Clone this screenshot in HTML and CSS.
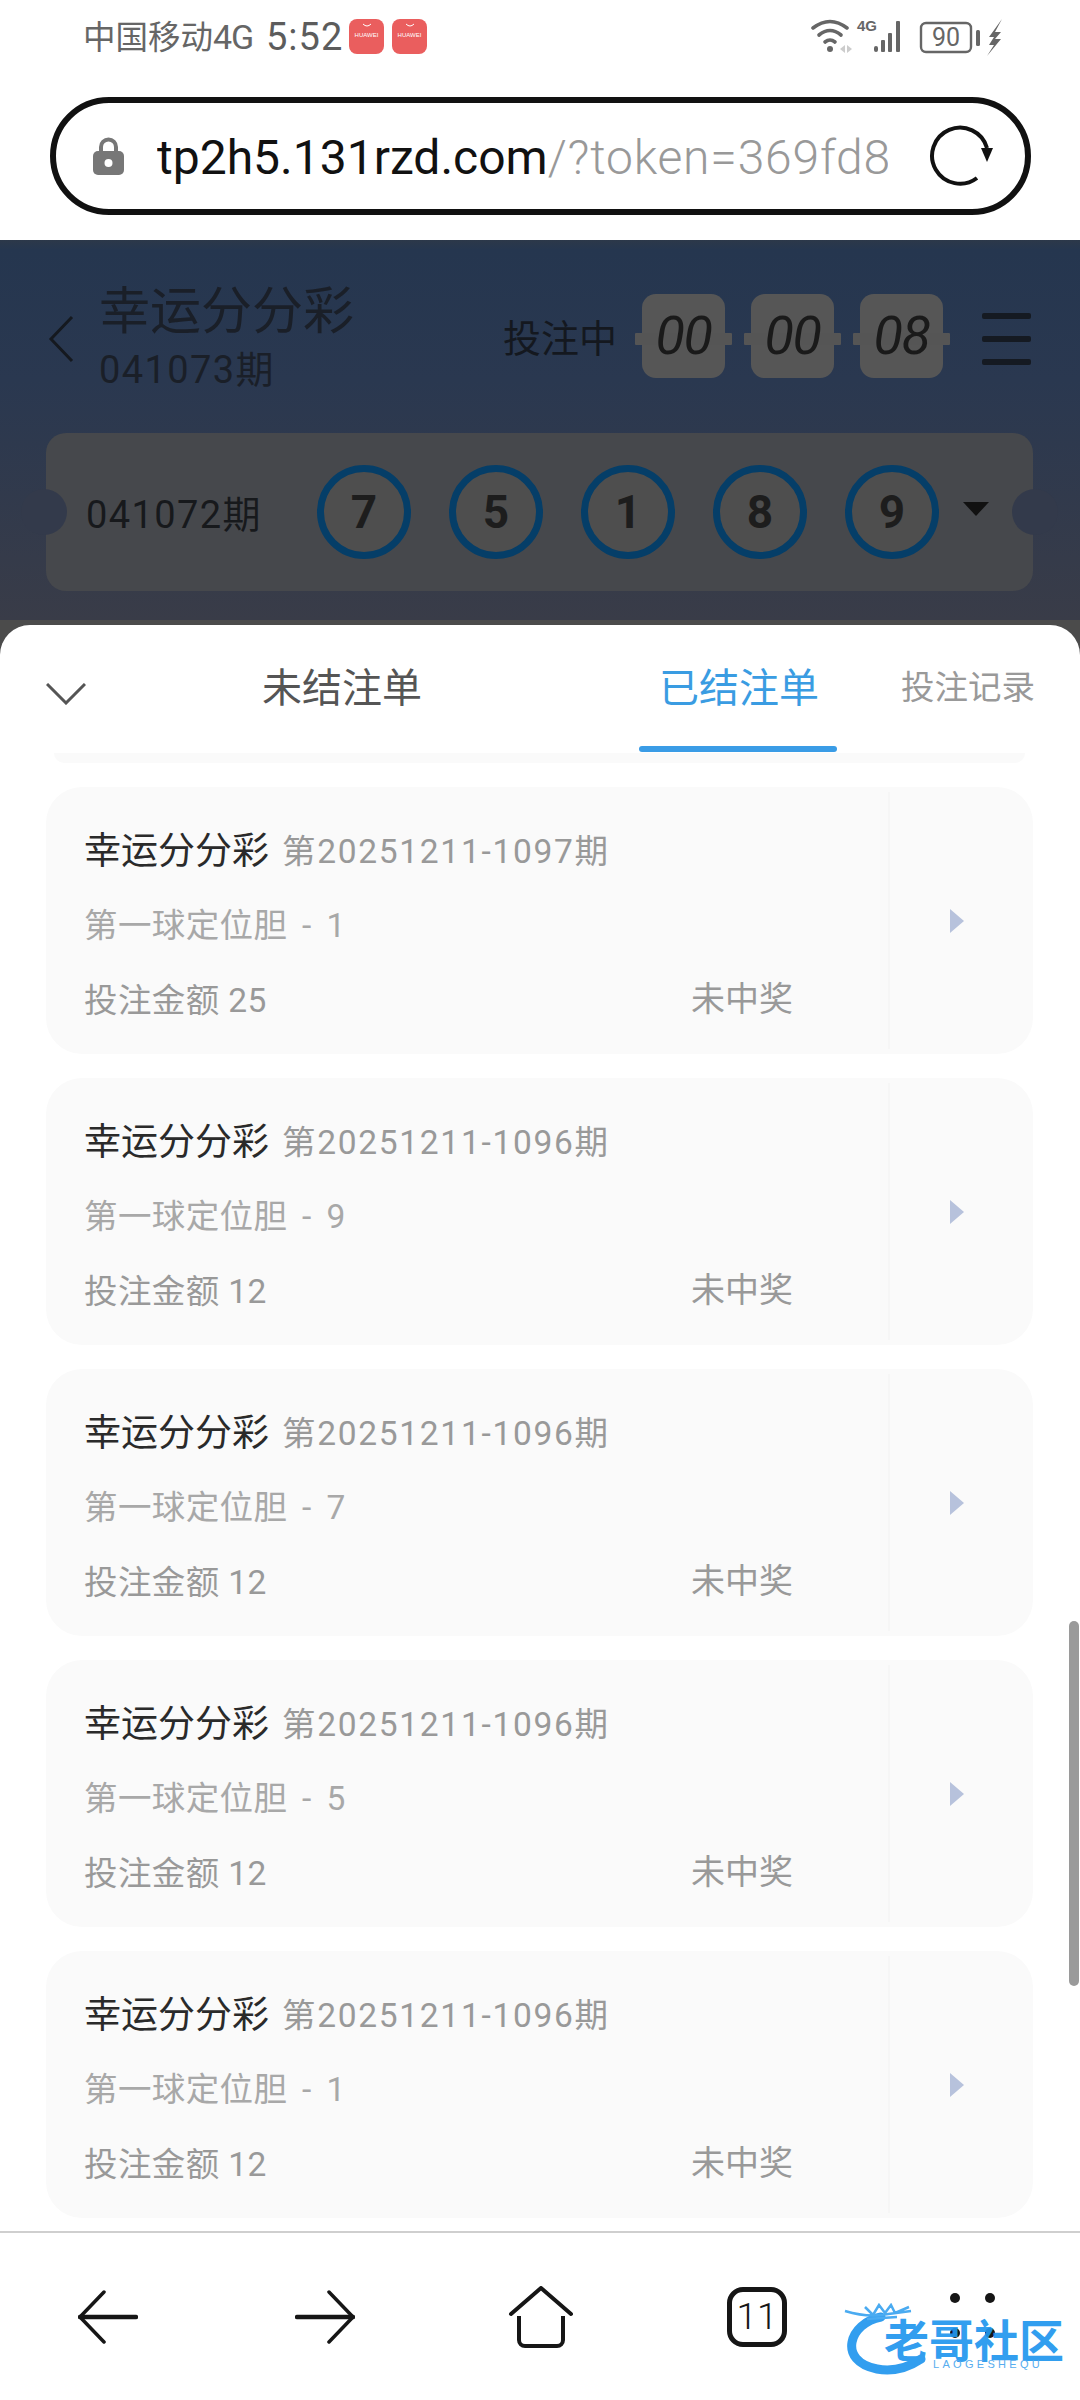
FILE: index.html
```html
<!DOCTYPE html>
<html lang="zh-CN">
<head>
<meta charset="utf-8">
<title>幸运分分彩</title>
<link rel="stylesheet" href="styles.css">
</head>
<body>
<div class="phone">
  <div class="top">
    <div class="status">
      <span class="carrier">中国移动<span class="carrier-net">4G</span></span>
      <span class="clock">5:52</span>
      <span class="app"><svg class="app-smile" viewBox="0 0 12 6"><path d="M2 1q4 4 8 0" fill="none" stroke="#fff" stroke-width="1"/></svg><span class="app-name">HUAWEI</span></span>
      <span class="app"><svg class="app-smile" viewBox="0 0 12 6"><path d="M2 1q4 4 8 0" fill="none" stroke="#fff" stroke-width="1"/></svg><span class="app-name">HUAWEI</span></span>
      <svg class="status-icons" width="194" height="40" viewBox="0 0 194 40">
        <g fill="none" stroke="#666" stroke-width="3.6" stroke-linecap="round">
          <path d="M2 12Q19 -1 36 12"/><path d="M8 19Q19 10 30 19"/><path d="M14 26Q19 22 24 26"/>
        </g>
        <circle cx="19" cy="33" r="3" fill="#666"/>
        <path d="M29 33l5-4v8zM36 29l5 4-5 4z" fill="#ccc"/>
        <text x="46" y="15" class="s4g">4G</text>
        <g fill="#666">
          <rect x="63" y="30" width="4" height="6" rx="2"/><rect x="70" y="24" width="4" height="12" rx="1"/><rect x="77" y="17" width="4" height="19" rx="1"/><rect x="85" y="5" width="4" height="31" rx="1"/>
        </g>
        <rect x="110" y="7" width="50" height="29" rx="5" fill="none" stroke="#666" stroke-width="2.4"/>
        <text x="135" y="30" class="sbatt">90</text>
        <rect x="165" y="14" width="4" height="16" rx="1.5" fill="#666"/>
        <path d="M191 3L178 21h5l-5 8h5l-7 11 14-17h-6l6-7h-6z" fill="#666"/>
      </svg>
    </div>
    <div class="urlbar">
      <svg class="lock" width="31" height="38" viewBox="0 0 31 38"><path d="M8 16V10a7.500 7.500 0 0 1 15 0v6" fill="none" stroke="#777" stroke-width="4"/><rect y="14" width="31" height="24" rx="5" fill="#777"/><circle cx="15.500" cy="26" r="4" fill="#fff"/></svg>
      <div class="url"><span class="url-host">tp2h5.131rzd.com</span><span class="url-rest">/?token=369fd8a2c17e</span></div>
      <svg class="reload" width="66" height="64" viewBox="0 0 66 64"><path d="M48 54A28 28 0 1 1 58 24" fill="none" stroke="#111" stroke-width="4"/><path d="M52 24H64L58 38Z" fill="#111"/></svg>
    </div>
  </div>

  <section class="hero">
    <div class="hero-head">
      <svg class="hero-back" width="26" height="48" viewBox="0 0 26 48"><path d="M24 2L3 24l21 22" fill="none" stroke="#15191f" stroke-width="3"/></svg>
      <div class="hero-title">
        <div class="hero-name">幸运分分彩</div>
        <div class="hero-issue">041073期</div>
      </div>
      <div class="hero-state">投注中</div>
      <div class="flip">00</div>
      <div class="flip">00</div>
      <div class="flip">08</div>
      <div class="burger"><i></i><i></i><i></i></div>
    </div>
    <div class="ticket">
      <span class="ticket-issue">041072期</span>
      <div class="balls">
        <span class="ball">7</span><span class="ball">5</span><span class="ball">1</span><span class="ball">8</span><span class="ball">9</span>
      </div>
      <span class="caret"></span>
    </div>
  </section>

  <section class="sheet-wrap">
    <div class="sheet">
      <div class="tabs">
        <svg class="collapse" width="40" height="22" viewBox="0 0 40 22"><path d="M1 1l19 19L39 1" fill="none" stroke="#555" stroke-width="3"/></svg>
        <span class="tab tab-open">未结注单</span>
        <span class="tab tab-active">已结注单</span>
        <span class="tab-log">投注记录</span>
      </div>
      <div class="list">
        <div class="peek"></div>

        <article class="card">
          <div class="card-main">
            <div class="row row-head"><span class="game">幸运分分彩</span><span class="period">第20251211-1097期</span></div>
            <div class="row pick">第一球定位胆 - 1</div>
            <div class="row row-split"><span class="stake">投注金额 25</span><span class="result">未中奖</span></div>
          </div>
          <div class="card-side"><span class="arrow"></span></div>
        </article>

        <article class="card">
          <div class="card-main">
            <div class="row row-head"><span class="game">幸运分分彩</span><span class="period">第20251211-1096期</span></div>
            <div class="row pick">第一球定位胆 - 9</div>
            <div class="row row-split"><span class="stake">投注金额 12</span><span class="result">未中奖</span></div>
          </div>
          <div class="card-side"><span class="arrow"></span></div>
        </article>

        <article class="card">
          <div class="card-main">
            <div class="row row-head"><span class="game">幸运分分彩</span><span class="period">第20251211-1096期</span></div>
            <div class="row pick">第一球定位胆 - 7</div>
            <div class="row row-split"><span class="stake">投注金额 12</span><span class="result">未中奖</span></div>
          </div>
          <div class="card-side"><span class="arrow"></span></div>
        </article>

        <article class="card">
          <div class="card-main">
            <div class="row row-head"><span class="game">幸运分分彩</span><span class="period">第20251211-1096期</span></div>
            <div class="row pick">第一球定位胆 - 5</div>
            <div class="row row-split"><span class="stake">投注金额 12</span><span class="result">未中奖</span></div>
          </div>
          <div class="card-side"><span class="arrow"></span></div>
        </article>

        <article class="card">
          <div class="card-main">
            <div class="row row-head"><span class="game">幸运分分彩</span><span class="period">第20251211-1096期</span></div>
            <div class="row pick">第一球定位胆 - 1</div>
            <div class="row row-split"><span class="stake">投注金额 12</span><span class="result">未中奖</span></div>
          </div>
          <div class="card-side"><span class="arrow"></span></div>
        </article>
      </div>
      <div class="scrollbar"></div>
    </div>
  </section>

  <nav class="nav">
    <svg class="nav-icon nav-back" width="60" height="54" viewBox="0 0 60 54"><path d="M26 2L2 27l24 25" fill="none" stroke="#161616" stroke-width="3.500" stroke-linecap="round"/><path d="M2 27H58" fill="none" stroke="#161616" stroke-width="4.500" stroke-linecap="round"/></svg>
    <svg class="nav-icon nav-forward" width="60" height="54" viewBox="0 0 60 54"><path d="M34 2L58 27 34 52" fill="none" stroke="#161616" stroke-width="3.500" stroke-linecap="round"/><path d="M2 27H58" fill="none" stroke="#161616" stroke-width="4.500" stroke-linecap="round"/></svg>
    <svg class="nav-icon nav-home" width="66" height="62" viewBox="0 0 66 62"><path d="M3 28L33 2 63 28" fill="none" stroke="#161616" stroke-width="4" stroke-linecap="round" stroke-linejoin="round"/><path d="M11 30V54a6 6 0 0 0 6 6H49a6 6 0 0 0 6-6V30" fill="none" stroke="#161616" stroke-width="4"/></svg>
    <span class="nav-tabs">11</span>
    <span class="nav-more"><i></i><i></i><i></i><i></i></span>
  </nav>

  <div class="watermark">
    <svg class="wm-logo" width="110" height="72" viewBox="0 0 110 72"><path d="M38 14C6 20-6 58 34 66c16 3 32-2 44-10" fill="none" stroke="#2196ee" stroke-width="9" stroke-linecap="round"/><path d="M2 8q20 6 36 4l30-4M22 4l8 8 6-10 6 8 6-8 4 8 14-6M24 16l30-2" fill="none" stroke="#3ba4f0" stroke-width="2.500"/></svg>
    <span class="wm-name">老哥社区</span>
    <span class="wm-sub">LAOGESHEQU</span>
  </div>
</div>
</body>
</html>
```

FILE: styles.css
```css
* { box-sizing: border-box; }
html, body { margin: 0; padding: 0; background: #fff; }
body { font-family: Roboto, "Noto Sans CJK SC", sans-serif; }

.phone {
  position: relative;
  width: 1080px;
  height: 2400px;
  overflow: hidden;
  display: flex;
  flex-direction: column;
  background: #fff;
}

/* top chrome */
.top { height: 240px; flex: none; padding-top: 18px; }
.status { height: 36px; display: flex; align-items: center; padding-left: 83px; color: #666; }
.carrier { font-size: 32.500px; line-height: 38px; width: 183px; white-space: nowrap; margin-top: 2px; }
.carrier-net { font-size: 34px; letter-spacing: -1px; }
.clock { font-size: 38px; line-height: 38px; width: 83px; color: #5c5c5c; letter-spacing: 1px; margin-top: 2px; }
.app {
  width: 35px; height: 35px; margin-right: 8px; border-radius: 8px; background: #ea5e5e;
  display: flex; flex-direction: column; align-items: center; padding-top: 4px; overflow: hidden;
}
.app-smile { width: 12px; height: 6px; margin-bottom: 3px; }
.app-name { font-size: 6px; line-height: 7px; color: #fff; font-family: "Liberation Sans", sans-serif; }
.status-icons { margin-left: auto; margin-right: 75px; }
.s4g { font-family: "Liberation Sans", sans-serif; font-size: 15px; font-weight: 700; fill: #666; }
.sbatt { font-family: Roboto, sans-serif; font-size: 25px; fill: #666; text-anchor: middle; }

.urlbar {
  margin: 43px 49px 0 50px;
  height: 118px;
  border: 6px solid #111;
  border-radius: 59px;
  display: flex;
  align-items: center;
  padding-left: 37px;
}
.lock { flex: none; }
.url {
  width: 731px; margin-left: 33px; font-size: 48px; line-height: 60px; padding-top: 3px;
  white-space: nowrap; overflow: hidden; color: #999; font-weight: 300;
}
.url-host { color: #111; font-weight: 400; }
.url-rest { letter-spacing: 0.800px; }
.reload { flex: none; margin-left: 41px; }

/* dark hero behind the sheet */
.hero {
  height: 380px; flex: none; padding-top: 50px;
  background: linear-gradient(#2c3849 0, #25364f 10px, #2a3850 140px, #393c48 100%);
}
.hero-head { height: 107px; display: flex; align-items: center; padding: 0 49px 0 48px; }
.hero-back { flex: none; margin-top: -9px; }
.hero-title { width: 392px; margin-left: 25px; margin-top: -4px; color: #1a1f28; }
.hero-name { font-size: 51px; line-height: 56px; }
.hero-issue { font-size: 38px; line-height: 60px; letter-spacing: 1.400px; }
.hero-state { width: 139px; font-size: 38px; line-height: 50px; color: #14181f; margin-top: -10px; margin-left: 11px; margin-left: 12px; }
.flip {
  position: relative; isolation: isolate; width: 83px; height: 84px; margin-right: 26px; margin-top: -15px;
  border-radius: 14px; color: #1a1a1a;
  background: linear-gradient(#565656 0 49%, #4e4e4e 49% 51%, #565656 51%);
  font-style: italic; font-weight: 400; font-size: 54px; line-height: 84px;
  letter-spacing: -1.500px; text-align: center;
}
.flip::before {
  content: ""; position: absolute; left: -7px; right: -7px; top: 39px; height: 12px;
  background: #555; border-radius: 1px; z-index: -1;
}
.burger { margin-left: 13px; margin-top: -9px; width: 49px; display: flex; flex-direction: column; gap: 17px; }
.burger i { display: block; height: 6px; border-radius: 2px; background: #151a22; }

.ticket {
  position: relative; height: 158px; margin: 36px 47px 0 46px; border-radius: 20px;
  background: #46484c; display: flex; align-items: center; padding-left: 40px;
}
.ticket::before, .ticket::after {
  content: ""; position: absolute; top: 56px; width: 46px; height: 46px; border-radius: 50%;
  background: #333a4b;
}
.ticket::before { left: -25px; }
.ticket::after { right: -25px; }
.ticket-issue { font-size: 38px; line-height: 50px; padding-top: 5px; width: 231px; color: #17191c; white-space: nowrap; letter-spacing: 1.400px; }
.balls { display: flex; gap: 38px; }
.ball {
  width: 94px; height: 94px; border-radius: 50%; border: 7px solid #053e68; background: #4e4e4e;
  display: flex; align-items: center; justify-content: center;
  font-size: 46px; font-weight: 700; color: #1d1d1d;
}
.caret {
  margin-left: 24px; margin-top: -6px; width: 0; height: 0;
  border-left: 13px solid transparent; border-right: 13px solid transparent; border-top: 14px solid #111;
}

/* bottom sheet */
.sheet-wrap { flex: 1; min-height: 0; background: #4b4b4b; padding-top: 5px; }
.sheet {
  position: relative; height: 100%; background: #fff; border-radius: 30px 30px 0 0;
  overflow: hidden; display: flex; flex-direction: column;
}
.tabs { height: 128px; flex: none; display: flex; align-items: center; padding: 0 0 0 46px; position: relative; }
.collapse { flex: none; margin-top: 10px; }
.tab { font-size: 40px; line-height: 50px; white-space: nowrap; }
.tab-open { margin-left: 176px; width: 397px; color: #555; }
.tab-active { width: 242px; color: #3a9ce2; position: relative; }
.tab-active::after {
  content: ""; position: absolute; left: -20px; width: 198px; bottom: -38px; height: 6px;
  border-radius: 3px; background: #3a9ce6;
}
.tab-log { font-size: 33.500px; line-height: 44px; color: #999; white-space: nowrap; margin-top: -2px; }

.list { flex: 1; min-height: 0; padding: 0 47px 0 46px; display: flex; flex-direction: column; gap: 24px; }
.peek { height: 10px; margin: 0 8px; flex: none; background: #fafafa; border-radius: 0 0 20px 20px; }
.card { flex: none; height: 267px; border-radius: 36px; background: #fafafa; display: flex; overflow: hidden; }
.card-main { flex: 1; padding: 24px 0 0 38px; color: #999; font-size: 33.500px; }
.row { height: 76px; display: flex; align-items: center; white-space: pre; line-height: 50px; }
.row-head { padding-top: 6px; }
.game { color: #2a2a2a; font-size: 37px; margin-right: 13px; }
.period { color: #999; font-size: 33.500px; letter-spacing: 1.700px; }
.pick { color: #a8a8a8; word-spacing: 6px; letter-spacing: 0.400px; padding-top: 2px; }
.stake { letter-spacing: 0.400px; }
.row-split { justify-content: space-between; padding-right: 95px; }
.result { margin-bottom: 4px; font-size: 34px; }
.card-side {
  width: 145px; flex: none; margin: 5px 0; border-left: 2px solid #f6f6f6;
  display: flex; align-items: center; padding-left: 60px;
}
.arrow { width: 0; height: 0; border-left: 14px solid #b7c2dc; border-top: 12px solid transparent; border-bottom: 12px solid transparent; }
.scrollbar { position: absolute; right: 1px; top: 996px; width: 10px; height: 365px; border-radius: 5px; background: #9a9a9a; }

/* browser nav */
.nav {
  height: 169px; flex: none; border-top: 2px solid #cfcfcf; background: #fff;
  display: flex; align-items: flex-start; position: relative;
}
.nav-icon { flex: none; }
.nav-back { margin: 57px 0 0 78px; }
.nav-forward { margin: 57px 0 0 157px; }
.nav-home { margin: 53px 0 0 153px; }
.nav-tabs {
  margin: 54px 0 0 153px; width: 60px; height: 60px; border: 5px solid #161616; border-radius: 16px;
  font-size: 37px; line-height: 50px; text-align: center; color: #161616; font-weight: 300;
}
.nav-more { margin: 60px 0 0 163px; width: 45px; display: grid; grid-template-columns: 10px 10px; column-gap: 25px; row-gap: 25px; }
.nav-more i { width: 10px; height: 10px; border-radius: 50%; background: #161616; }

.watermark { position: absolute; left: 843px; top: 2303px; width: 225px; height: 72px; opacity: .92; }
.wm-logo { position: absolute; left: 0; top: 0; }
.wm-name {
  position: absolute; left: 41px; top: 23px; font-size: 45px; line-height: 34px; font-weight: 700; color: #2196ee;
  white-space: nowrap;
}
.wm-sub {
  position: absolute; left: 90px; top: 57px; font-size: 11px; line-height: 8px; letter-spacing: 3.300px; color: #4aa7ee;
  font-family: "Liberation Sans", sans-serif; white-space: nowrap;
}
```
